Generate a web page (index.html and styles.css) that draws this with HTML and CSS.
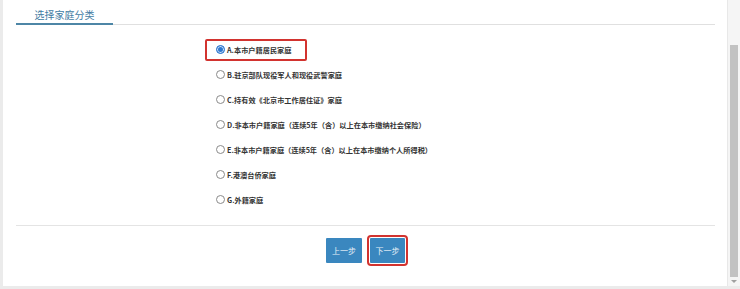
FILE: index.html
```html
<!DOCTYPE html>
<html>
<head lang="zh-CN">
    <meta charset="UTF-8">
    <title>选择家庭分类</title>
    <link rel="stylesheet" href="styles.css">
</head>
<body>
<div class="frame">
    <div class="panel">
        <div class="tab-head">
            <span class="tab-title">选择家庭分类</span>
        </div>
        <ul class="option-list">
            <li><label class="option selected"><span class="radio checked"></span>A.本市户籍居民家庭</label></li>
            <li><label class="option"><span class="radio"></span>B.驻京部队现役军人和现役武警家庭</label></li>
            <li><label class="option"><span class="radio"></span>C.持有效《北京市工作居住证》家庭</label></li>
            <li><label class="option"><span class="radio"></span>D.非本市户籍家庭（连续5年（含）以上在本市缴纳社会保险）</label></li>
            <li><label class="option"><span class="radio"></span>E.非本市户籍家庭（连续5年（含）以上在本市缴纳个人所得税）</label></li>
            <li><label class="option"><span class="radio"></span>F.港澳台侨家庭</label></li>
            <li><label class="option"><span class="radio"></span>G.外籍家庭</label></li>
        </ul>
        <div class="button-bar">
            <a href="javascript:void(0);" class="btn">上一步</a>
            <a href="javascript:void(0);" class="btn btn-marked">下一步</a>
        </div>
    </div>
    <div class="scrollbar">
        <div class="scroll-thumb"></div>
        <div class="scroll-arrow"></div>
    </div>
</div>
</body>
</html>
```

FILE: styles.css
```css
body, ul, li, div, span, label, a {
    padding: 0px;
    margin: 0px;
}
body {
    background: #ebebeb;
    font-family: "Noto Sans CJK SC", "Noto Sans", sans-serif;
}
ul {
    list-style: none;
}
a {
    text-decoration: none;
}
.frame {
    display: flex;
    height: 286px;
    padding-left: 3px;
}
.panel {
    flex: 1;
    background: #ffffff;
    padding: 0px 12px 0px 13px;
}
.tab-head {
    height: 24px;
    border-bottom: 1px solid #e0e0e0;
    display: flex;
    align-items: flex-end;
}
.tab-title {
    width: 97px;
    text-align: center;
    font-size: 10px;
    line-height: 14px;
    padding-bottom: 1px;
    color: #3f7ca3;
    border-bottom: 2px solid #4d86a6;
    margin-bottom: -1px;
}
.option-list {
    padding: 12px 0px 0px 189px;
    height: 188px;
    border-bottom: 1px solid #e4e4e4;
}
.option-list li {
    height: 25px;
    display: flex;
    align-items: center;
}
.option {
    display: flex;
    align-items: center;
    height: 18px;
    padding: 0px 14px 0px 9px;
    border: 2px solid transparent;
    border-radius: 2px;
    font-size: 7.2px;
    font-weight: bold;
    color: #333333;
    white-space: nowrap;
}
.option.selected {
    border-color: #d2332f;
}
.radio {
    width: 7px;
    height: 7px;
    border: 1px solid #8a8a8a;
    border-radius: 50%;
    background: #ffffff;
    margin-right: 2px;
}
.radio.checked {
    border-color: #2f78d0;
    background: #2f78d0;
    box-shadow: inset 0px 0px 0px 1px #cfe2f7;
}
.button-bar {
    display: flex;
    justify-content: center;
    gap: 8px;
    padding-top: 12px;
}
.btn {
    display: block;
    width: 36px;
    height: 25px;
    line-height: 25px;
    text-align: center;
    font-size: 8px;
    color: #e8f1f8;
    background: #3a87bf;
    border-radius: 1px;
}
.btn-marked {
    width: 35px;
    outline: 2px solid #d2332f;
    outline-offset: 1px;
    border-radius: 1px;
}
.scrollbar {
    width: 12px;
    background: #f5f5f5;
    border-left: 1px solid #e8e8e8;
    display: flex;
    flex-direction: column;
    align-items: center;
}
.scroll-thumb {
    width: 8px;
    height: 232px;
    margin-top: 45px;
    background: #c2c2c2;
}
.scroll-arrow {
    margin-top: 3px;
    width: 0px;
    height: 0px;
    border-left: 3px solid transparent;
    border-right: 3px solid transparent;
    border-top: 3px solid #a0a0a0;
}
```
